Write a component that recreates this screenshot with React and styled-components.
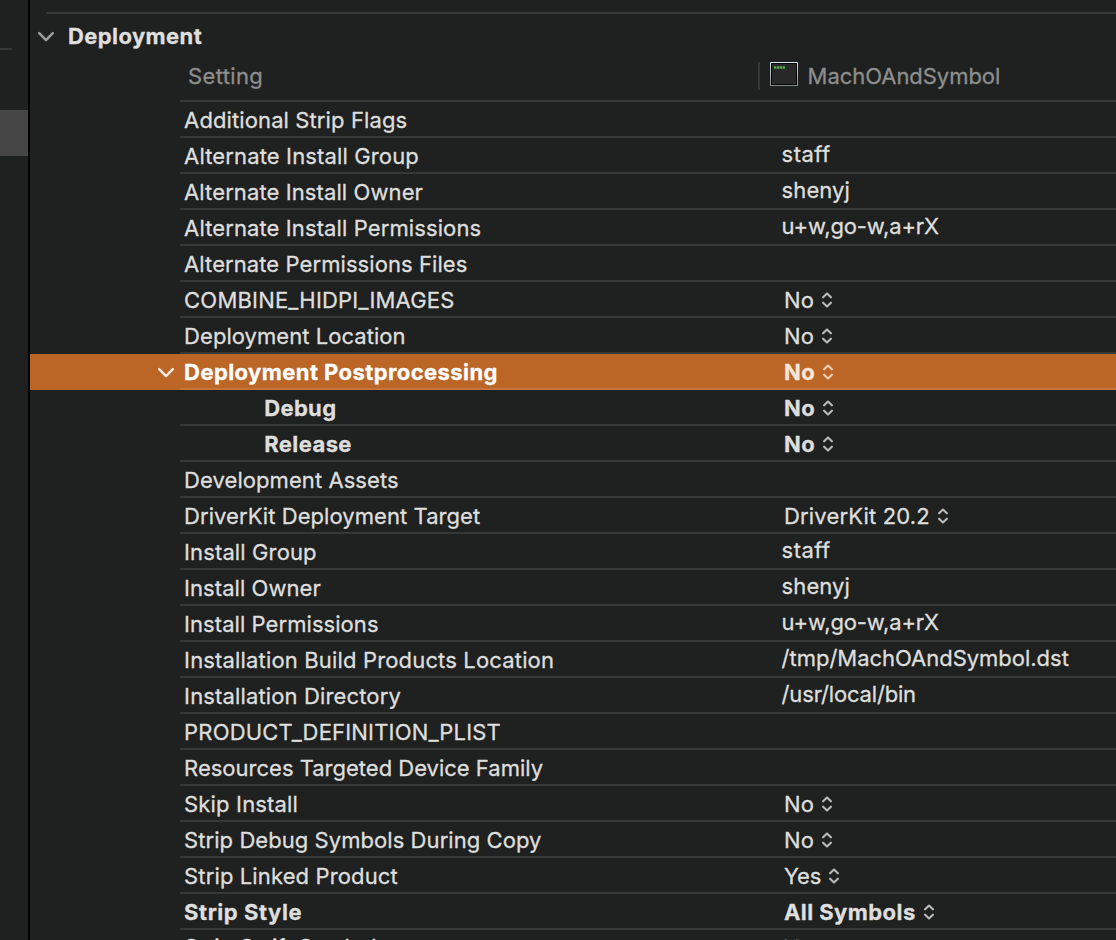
import React from "react";
import styled, { createGlobalStyle } from "styled-components";

const GlobalStyle = createGlobalStyle`
  *, *::before, *::after { box-sizing: border-box; }
  body {
    margin: 0;
    background: #1f2120;
    color: #dededd;
    font: 400 22px/36px Inter, "Liberation Sans", sans-serif;
    overflow: hidden;
  }
`;

const Window = styled.div`
  display: flex;
  height: 940px;
  overflow: hidden;
`;

const Sidebar = styled.aside`
  flex: none;
  width: 30px;
  border-right: 2px solid #000;
  padding-top: 48px;
`;

const SidebarRule = styled.div`
  width: 12px;
  height: 2px;
  background: #363837;
`;

const SidebarSelection = styled.div`
  height: 46px;
  margin-top: 60px;
  background: #464646;
`;

const Editor = styled.main`
  flex: 1;
  min-width: 0;
  padding-top: 12px;
`;

const SectionRule = styled.div`
  height: 2px;
  margin-left: 16px;
  background: #363837;
`;

const SectionHeader = styled.header`
  display: flex;
  align-items: center;
  height: 44px;
  padding-left: 7px;
  gap: 13px;
  font-weight: 700;
  color: #dfdfde;
`;

const Columns = styled.div`
  display: grid;
  grid-template-columns: 578px 1fr;
  height: 44px;
  margin-left: 150px;
  border-bottom: 2px solid #363837;
  color: #8d8e8d;
`;

const SettingColumn = styled.div`
  padding-left: 8px;
`;

const TargetColumn = styled.div`
  display: flex;
  align-items: flex-start;
`;

const ColumnDivider = styled.div`
  width: 2px;
  height: 28px;
  margin: 4px 10px 0 0;
  background: #363837;
`;

const TargetIcon = styled.svg`
  flex: none;
  width: 28px;
  height: 26px;
  margin: 3px 9.6px 0 0;
`;

const Row = styled.div`
  display: grid;
  grid-template-columns: 150px 1fr;
  height: 36px;
  line-height: ${(p) => (p.$last ? 34 : 36)}px;
  background: ${(p) => (p.$selected ? "#bb6627" : "transparent")};
  color: ${(p) => (p.$selected ? "#fff" : "inherit")};
  font-weight: ${(p) => (p.$bold ? 700 : 400)};
`;

const Gutter = styled.div`
  display: flex;
  align-items: center;
  justify-content: flex-end;
  padding-right: 5px;
`;

const Cells = styled.div`
  display: grid;
  grid-template-columns: 601px 1fr;
  box-shadow: inset 0 -2px ${(p) => (p.$selected ? "#c4763e" : "#363837")};
`;

const Name = styled.div`
  padding-left: ${(p) => (p.$nested ? 84.2 : 4.1)}px;
`;

const TextValue = styled.div`
  line-height: 32px;
  padding-left: 0.6px;
`;

const PopupValue = styled.div`
  display: flex;
  align-items: center;
  gap: 8px;
  padding-left: 2.9px;
  color: ${(p) => (p.$selected ? "#f6e7dd" : "inherit")};
`;

const Label = styled.span`
  white-space: pre;
  letter-spacing: ${(p) => p.$track || 0}px;
  -webkit-text-stroke: 0.3px currentColor;
`;

const ChevronSvg = styled.svg`
  flex: none;
  width: 18px;
  height: 12px;
  margin-top: 2px;
  color: ${(p) => p.$color};
`;

const StepperSvg = styled.svg`
  flex: none;
  width: 10px;
  height: 16px;
  color: ${(p) => (p.$selected ? "#efcfb8" : "#b9bab9")};
`;

const Chevron = ({ color }) => (
  <ChevronSvg $color={color} viewBox="0 0 18 12" fill="none">
    <path d="M2.2 2.2 9 9.2l6.8-7" stroke="currentColor" strokeWidth="2.5" strokeLinecap="round" strokeLinejoin="round" />
  </ChevronSvg>
);

const Stepper = ({ selected }) => (
  <StepperSvg $selected={selected} viewBox="0 0 10 16" fill="none">
    <path d="M1.1 5.3 5 1.6l3.9 3.7M1.1 10.7 5 14.4l3.9-3.7" stroke="currentColor" strokeWidth="2.1" strokeLinecap="round" strokeLinejoin="round" />
  </StepperSvg>
);

const ExecIcon = () => (
  <TargetIcon viewBox="0 0 28 26">
    <defs>
      <linearGradient id="frame" x1="0" y1="0" x2="0" y2="1">
        <stop offset="0" stopColor="#d5e8ee" />
        <stop offset="1" stopColor="#858989" />
      </linearGradient>
    </defs>
    <rect x="0" y="1" width="28" height="24" rx="0.8" fill="url(#frame)" />
    <rect x="1" y="2" width="26" height="22" fill="#050505" />
    <rect x="2" y="3" width="24" height="20" fill="#282828" />
    <path d="M4 6.5h11" stroke="#4fae4d" strokeWidth="2.6" strokeDasharray="2.3 0.6" />
  </TargetIcon>
);

const settings = [
  { name: "Additional Strip Flags", track: 0.11 },
  { name: "Alternate Install Group", track: 0.14, text: "staff", valueTrack: 0.45 },
  { name: "Alternate Install Owner", track: 0.1, text: "shenyj", valueTrack: 0.1 },
  { name: "Alternate Install Permissions", track: 0.11, text: "u+w,go-w,a+rX", valueTrack: -0.15 },
  { name: "Alternate Permissions Files", track: 0.08 },
  { name: "COMBINE_HIDPI_IMAGES", track: 0.2, popup: "No", valueTrack: 0.3 },
  { name: "Deployment Location", track: 0.05, popup: "No", valueTrack: 0.3 },
  { name: "Deployment Postprocessing", track: 0.42, popup: "No", valueTrack: 0.5, bold: true, selected: true },
  { name: "Debug", track: 0.35, popup: "No", valueTrack: 0.5, bold: true, nested: true },
  { name: "Release", track: 0.42, popup: "No", valueTrack: 0.5, bold: true, nested: true },
  { name: "Development Assets", track: 0.07 },
  { name: "DriverKit Deployment Target", track: 0.06, popup: "DriverKit 20.2", valueTrack: 0.18 },
  { name: "Install Group", track: 0.12, text: "staff", valueTrack: 0.45 },
  { name: "Install Owner", track: 0.06, text: "shenyj", valueTrack: 0.1 },
  { name: "Install Permissions", track: 0.06, text: "u+w,go-w,a+rX", valueTrack: -0.15 },
  { name: "Installation Build Products Location", track: 0.16, text: "/tmp/MachOAndSymbol.dst", valueTrack: -0.02 },
  { name: "Installation Directory", track: 0.14, text: "/usr/local/bin", valueTrack: -0.17 },
  { name: "PRODUCT_DEFINITION_PLIST", track: 0.18 },
  { name: "Resources Targeted Device Family", track: 0 },
  { name: "Skip Install", track: 0.16, popup: "No", valueTrack: 0.3 },
  { name: "Strip Debug Symbols During Copy", track: 0.06, popup: "No", valueTrack: 0.3 },
  { name: "Strip Linked Product", track: 0.13, popup: "Yes", valueTrack: -0.15 },
  { name: "Strip Style", track: 0.55, popup: "All Symbols", valueTrack: 0.44, bold: true },
  { name: "Strip Swift Symbols", track: 0.1, popup: "Yes", valueTrack: -0.15, last: true },
];

function SettingRow({ item }) {
  return (
    <Row $selected={item.selected} $bold={item.bold} $last={item.last}>
      <Gutter>{item.selected && <Chevron color="#f8e9df" />}</Gutter>
      <Cells $selected={item.selected}>
        <Name $nested={item.nested}>
          <Label $track={item.track}>{item.name}</Label>
        </Name>
        {item.text && (
          <TextValue>
            <Label $track={item.valueTrack}>{item.text}</Label>
          </TextValue>
        )}
        {item.popup && (
          <PopupValue $selected={item.selected}>
            <Label $track={item.valueTrack}>{item.popup}</Label>
            <Stepper selected={item.selected} />
          </PopupValue>
        )}
      </Cells>
    </Row>
  );
}

export default function App() {
  return (
    <>
      <GlobalStyle />
      <Window>
        <Sidebar>
          <SidebarRule />
          <SidebarSelection />
        </Sidebar>
        <Editor>
          <SectionRule />
          <SectionHeader>
            <Chevron color="#9b9c9b" />
            <Label $track={0.4}>Deployment</Label>
          </SectionHeader>
          <Columns>
            <SettingColumn>
              <Label $track={0.35}>Setting</Label>
            </SettingColumn>
            <TargetColumn>
              <ColumnDivider />
              <ExecIcon />
              <Label $track={-0.04}>MachOAndSymbol</Label>
            </TargetColumn>
          </Columns>
          {settings.map((item) => (
            <SettingRow key={item.name} item={item} />
          ))}
        </Editor>
      </Window>
    </>
  );
}
